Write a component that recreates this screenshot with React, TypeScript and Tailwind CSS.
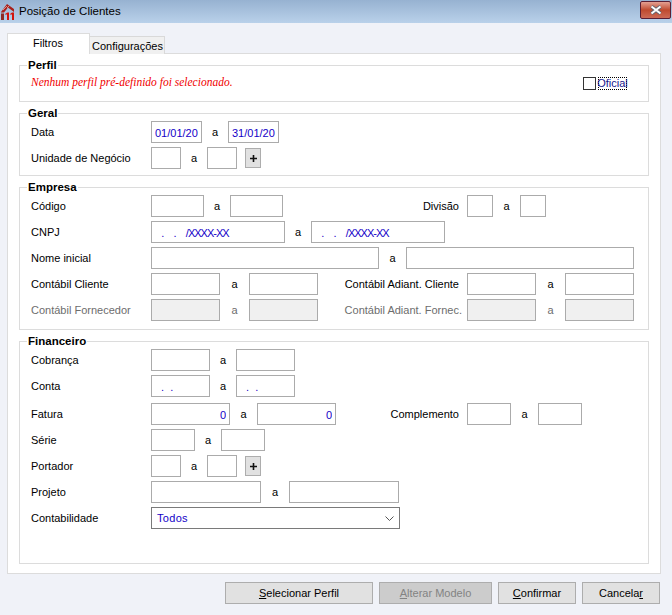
import type { ReactNode } from "react";

const ui = "font-['Liberation_Sans',Arial,sans-serif]";

function Field({
  width,
  value = "",
  disabled = false,
  right = false,
  tight = false,
}: {
  width: string;
  value?: string;
  disabled?: boolean;
  right?: boolean;
  tight?: boolean;
}) {
  return (
    <input
      readOnly
      value={value}
      disabled={disabled}
      className={`${width} h-[22px] shrink-0 border border-[#ababab] px-[3px] pt-[1px] text-[11px] text-[#1400c8] outline-none ${
        disabled ? "bg-[#f0f0f0]" : "bg-white"
      } ${right ? "text-right" : "text-left"} ${tight ? "tracking-[-1px]" : ""}`}
    />
  );
}

function To({ width, muted = false }: { width: string; muted?: boolean }) {
  return (
    <span className={`${width} shrink-0 pt-[1px] text-center ${muted ? "text-[#6d6d6d]" : ""}`}>a</span>
  );
}

function Row({
  label,
  muted = false,
  className = "",
  children,
}: {
  label: string;
  muted?: boolean;
  className?: string;
  children: ReactNode;
}) {
  return (
    <div className={`flex h-[22px] items-center ${className}`}>
      <span className={`w-[120px] shrink-0 pt-[1px] ${muted ? "text-[#6d6d6d]" : ""}`}>{label}</span>
      {children}
    </div>
  );
}

function Group({
  title,
  className = "",
  children,
}: {
  title: string;
  className?: string;
  children: ReactNode;
}) {
  return (
    <fieldset className={`min-w-0 border border-[#dcdcdc] ${className}`}>
      <legend className="ml-[7px] px-[1px] text-[11.5px] leading-[14px] font-bold">{title}</legend>
      {children}
    </fieldset>
  );
}

function PlusButton() {
  return (
    <button className="ml-[8px] flex h-[20px] w-[16px] shrink-0 items-center justify-center border border-[#adadad] bg-[#e1e1e1]">
      <svg width="9" height="9" viewBox="0 0 9 9">
        <path d="M4.500 1v7M1 4.500h7" stroke="#111" strokeWidth="1.600" />
      </svg>
    </button>
  );
}

function FooterButton({
  width,
  disabled = false,
  children,
}: {
  width: string;
  disabled?: boolean;
  children: ReactNode;
}) {
  return (
    <button
      className={`${width} h-[22px] border border-[#adadad] text-[11px] ${
        disabled ? "bg-[#cccccc] text-[#838383]" : "bg-[#e1e1e1] text-black"
      }`}
    >
      {children}
    </button>
  );
}

export default function App() {
  return (
    <div className={`flex h-[615px] w-[672px] flex-col overflow-hidden bg-[#f0f2f8] text-[11px] text-black ${ui}`}>
      {/* TITLE BAR */}
      <div className="flex h-[23px] shrink-0 items-center bg-gradient-to-b from-[#97b2d1] to-[#b9d1ea] pr-[1px]">
        <svg width="14" height="16" viewBox="0 0 14 16" className="mt-[1px] shrink-0">
          <path d="M1 8 7 0l7 5v3L8 3.500 4 8.500H1Z" fill="#a8201a" />
          <path d="M3 6 7 2M7 4 9 2" stroke="#e8a8a0" strokeWidth=".8" />
          <path d="M1 9.500h3V16H1Z" fill="#8f2a24" />
          <path d="M5 10l2.500-1.500H9V16H7v-5.500H5ZM10 10l2-1.500h2V16h-2v-5.500h-2Z" fill="#d3140c" />
        </svg>
        <span className="ml-[5px] text-[11.5px]">Posição de Clientes</span>
        <div className="mb-[3px] ml-auto flex h-[18px] w-[31px] items-center justify-center rounded-[2px] border border-[#5a1f33] bg-gradient-to-b from-[#e3a092] via-[#bf4a2e] to-[#cd6a55]">
          <svg width="14" height="10" viewBox="0 0 14 10">
            <path d="M2.500 1.500 11.500 8.500M11.500 1.500 2.500 8.500" stroke="#5d6470" strokeWidth="3.600" />
            <path d="M2.500 1.500 11.500 8.500M11.500 1.500 2.500 8.500" stroke="#fff" strokeWidth="2" />
          </svg>
        </div>
      </div>

      {/* TABS */}
      <div className="relative z-10 -mb-px flex items-end pt-[10px] pl-[7px]">
        <div className="h-[21px] w-[83px] border border-b-0 border-[#dcdcdc] bg-white pt-[1px] pl-[25px]">Filtros</div>
        <div className="h-[18px] w-[75px] border border-b-0 border-l-0 border-[#d9d9d9] bg-[#f0f0f0] pl-[2px] leading-[18px]">
          Configurações
        </div>
      </div>

      {/* PANEL */}
      <div className="ml-[7px] flex h-[521px] w-[654px] flex-col gap-[4px] border border-[#dcdcdc] bg-white px-[11px] pt-[4px] pb-[9px]">
        <Group title="Perfil" className="h-[44px]">
          <div className="flex h-[22px] items-center pr-[21px] pl-[11px]">
            <span className="font-['Liberation_Serif',serif] text-[11.5px] text-[#f00000] italic">
              Nenhum perfil pré-definido foi selecionado.
            </span>
            <span className="ml-auto h-[13px] w-[13px] border border-[#333333] bg-white" />
            <span className="ml-[2px] flex h-[13px] w-[29px] items-center justify-center border border-dotted border-black text-[#16168c] leading-none">
              Oficial
            </span>
          </div>
        </Group>

        <Group title="Geral" className="h-[70px]">
          <div className="flex flex-col gap-[4px] px-[11px] pt-[1px]">
            <Row label="Data">
              <Field width="w-[51px]" value="01/01/20" />
              <To width="w-[26px]" />
              <Field width="w-[51px]" value="31/01/20" />
            </Row>
            <Row label="Unidade de Negócio">
              <Field width="w-[30px]" />
              <To width="w-[26px]" />
              <Field width="w-[30px]" />
              <PlusButton />
            </Row>
          </div>
        </Group>

        <Group title="Empresa" className="h-[150px]">
          <div className="flex flex-col gap-[4px] px-[11px] pt-[1px]">
            <Row label="Código">
              <Field width="w-[53px]" />
              <To width="w-[26px]" />
              <Field width="w-[53px]" />
              <span className="mr-[8px] w-[176px] shrink-0 pt-[1px] text-right">Divisão</span>
              <Field width="w-[26px]" />
              <To width="w-[27px]" />
              <Field width="w-[26px]" />
            </Row>
            <Row label="CNPJ">
              <Field width="w-[134px]" value="   .     .     /XXXX-XX" tight />
              <To width="w-[26px]" />
              <Field width="w-[134px]" value="   .     .     /XXXX-XX" tight />
            </Row>
            <Row label="Nome inicial">
              <Field width="w-[228px]" />
              <To width="w-[27px]" />
              <Field width="w-[228px]" />
            </Row>
            <Row label="Contábil Cliente">
              <Field width="w-[69px]" />
              <To width="w-[29px]" />
              <Field width="w-[69px]" />
              <span className="mr-[8px] w-[141px] shrink-0 pt-[1px] text-right">Contábil Adiant. Cliente</span>
              <Field width="w-[69px]" />
              <To width="w-[29px]" />
              <Field width="w-[69px]" />
            </Row>
            <Row label="Contábil Fornecedor" muted>
              <Field width="w-[69px]" disabled />
              <To width="w-[29px]" muted />
              <Field width="w-[69px]" disabled />
              <span className="mr-[5px] w-[144px] shrink-0 pt-[1px] text-right text-[#6d6d6d]">Contábil Adiant. Fornec.</span>
              <Field width="w-[69px]" disabled />
              <To width="w-[29px]" muted />
              <Field width="w-[69px]" disabled />
            </Row>
          </div>
        </Group>

        <Group title="Financeiro" className="flex-1">
          <div className="flex flex-col gap-[4px] px-[11px] pt-[1px]">
            <Row label="Cobrança">
              <Field width="w-[59px]" />
              <To width="w-[26px]" />
              <Field width="w-[59px]" />
            </Row>
            <Row label="Conta">
              <Field width="w-[59px]" value="  .  ." />
              <To width="w-[26px]" />
              <Field width="w-[59px]" value="  .  ." />
            </Row>
            <Row label="Fatura" className="mt-[2px]">
              <Field width="w-[79px]" value="0" right />
              <To width="w-[27px]" />
              <Field width="w-[79px]" value="0" right />
              <span className="mr-[8px] w-[123px] shrink-0 pt-[1px] text-right">Complemento</span>
              <Field width="w-[44px]" />
              <To width="w-[27px]" />
              <Field width="w-[44px]" />
            </Row>
            <Row label="Série">
              <Field width="w-[44px]" />
              <To width="w-[26px]" />
              <Field width="w-[44px]" />
            </Row>
            <Row label="Portador">
              <Field width="w-[30px]" />
              <To width="w-[26px]" />
              <Field width="w-[30px]" />
              <PlusButton />
            </Row>
            <Row label="Projeto">
              <Field width="w-[110px]" />
              <To width="w-[28px]" />
              <Field width="w-[110px]" />
            </Row>
            <Row label="Contabilidade">
              <div className="flex h-[22px] w-[249px] items-center justify-between border border-[#7a7a7a] bg-white pr-[5px] pl-[5px] text-[#1400c8]">
                <span className="tracking-[0.3px]">Todos</span>
                <svg width="9" height="5" viewBox="0 0 9 5">
                  <path d="M.5.5 4.500 4.500 8.500.5" fill="none" stroke="#555" />
                </svg>
              </div>
            </Row>
          </div>
        </Group>
      </div>

      {/* FOOTER */}
      <div className="mt-[8px] flex gap-[6px] pl-[225px]">
        <FooterButton width="w-[148px]">
          <u>S</u>elecionar Perfil
        </FooterButton>
        <FooterButton width="w-[113px]" disabled>
          <u>A</u>lterar Modelo
        </FooterButton>
        <FooterButton width="w-[78px]">
          <u>C</u>onfirmar
        </FooterButton>
        <FooterButton width="w-[78px]">
          Cancela<u>r</u>
        </FooterButton>
      </div>
    </div>
  );
}
